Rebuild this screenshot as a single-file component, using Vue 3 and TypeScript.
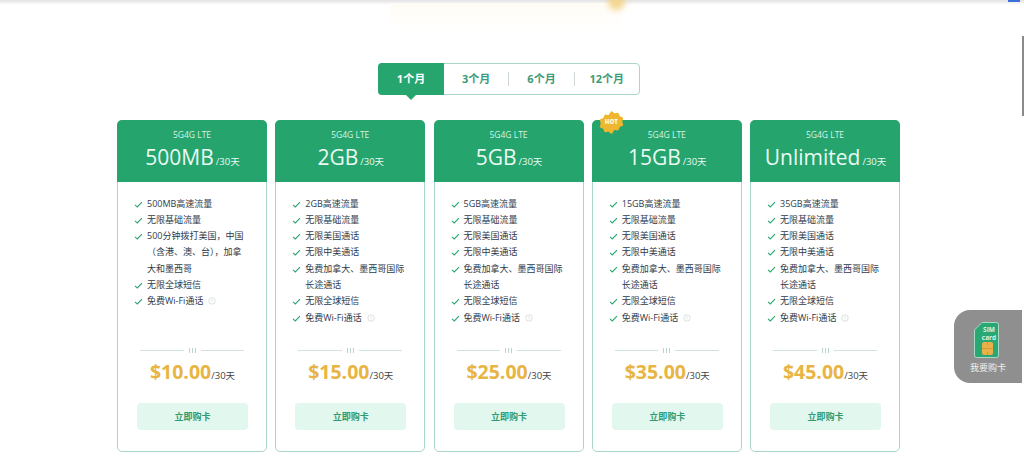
<script setup lang="ts">
interface Plan { size: string; price: string; hot?: boolean; features: { text: string; tip?: boolean }[] }
const common = (first: string): { text: string; tip?: boolean }[] => [
  { text: first },
  { text: '无限基础流量' },
  { text: '无限美国通话' },
  { text: '无限中美通话' },
  { text: '免费加拿大、墨西哥国际长途通话' },
  { text: '无限全球短信' },
  { text: '免费Wi-Fi通话', tip: true },
]
const plans: Plan[] = [
  { size: '500MB', price: '$10.00', features: [
    { text: '500MB高速流量' },
    { text: '无限基础流量' },
    { text: '500分钟拨打美国，中国（含港、澳、台），加拿大和墨西哥' },
    { text: '无限全球短信' },
    { text: '免费Wi-Fi通话', tip: true },
  ] },
  { size: '2GB', price: '$15.00', features: common('2GB高速流量') },
  { size: '5GB', price: '$25.00', features: common('5GB高速流量') },
  { size: '15GB', price: '$35.00', hot: true, features: common('15GB高速流量') },
  { size: 'Unlimited', price: '$45.00', features: common('35GB高速流量') },
]
const tabs = ['1个月', '3个月', '6个月', '12个月']
</script>

<template>
  <div class="page">
    <div class="topband"></div>
    <div class="glow"></div>
    <div class="blob"></div>
    <div class="bluetab"></div>
    <div class="scrollthumb"></div>

    <div class="tabs">
      <div v-for="(t, i) in tabs" :key="t" class="tab" :class="{ active: i === 0, sep: i > 1 }">{{ t }}</div>
    </div>

    <div class="cards">
      <section v-for="p in plans" :key="p.size" class="card">
        <svg v-if="p.hot" class="hot" viewBox="0 0 26 26" aria-hidden="true">
          <path d="M13 2l2.900 2.300 3.600-.8 1.500 3.400 3.300 1.500-.8 3.600.8 3.600-3.300 1.500-1.500 3.400-3.600-.8L13 24l-2.900-2.300-3.600.8-1.500-3.400-3.300-1.500.8-3.600-.8-3.600 3.300-1.500 1.500-3.400 3.600.8z" fill="#efb62f" stroke="#efb62f" stroke-width="1.500" stroke-linejoin="round" />
        </svg>
        <span v-if="p.hot" class="hot-text">HOT</span>
        <header class="head">
          <div class="net">5G4G LTE</div>
          <div class="size">{{ p.size }}<small>/30天</small></div>
        </header>
        <ul class="features">
          <li v-for="f in p.features" :key="f.text">
            <svg class="check" viewBox="0 0 10 8" aria-hidden="true"><path d="M1 4.500l2.600 2.300L9 1.200" /></svg>
            <span>{{ f.text }}<svg v-if="f.tip" class="tip" viewBox="0 0 10 10" aria-hidden="true"><circle cx="5" cy="5" r="4" /><path d="M5 3v2.500M5 7v.5" /></svg></span>
          </li>
        </ul>
        <div class="divider"><i></i><b></b><b></b><b></b><i></i></div>
        <div class="price"><strong>{{ p.price }}</strong><span>/30天</span></div>
        <button class="buy" type="button">立即购卡</button>
      </section>
    </div>

    <aside class="float">
      <svg class="sim" viewBox="0 0 25 36" aria-hidden="true">
        <path d="M8 .5h14.500a2 2 0 0 1 2 2v31a2 2 0 0 1-2 2h-20a2 2 0 0 1-2-2V8z" fill="#2aa873" stroke="#bfe8d4" stroke-width=".8" />
        <rect x="8" y="20" width="11" height="13" rx="2" fill="#eab04a" />
        <path d="M8 26.500h11M13.500 20v3M13.500 30v3" stroke="#c98f2e" stroke-width=".7" />
      </svg>
      <span class="sim-text">SIM<br />card</span>
      <div class="float-label">我要购卡</div>
    </aside>
  </div>
</template>

<style>
html, body { margin: 0; background: #fff; }
</style>

<style scoped>
.page {
  position: relative;
  height: 456px;
  overflow: hidden;
  background: #fff;
  padding-top: 63px;
  box-sizing: border-box;
  font-family: "Open Sans", "Noto Sans CJK SC", sans-serif;
  color: #2f3b4a;
}
.topband {
  position: absolute; left: 0; right: 0; top: 0; height: 5px;
  background: linear-gradient(#e2e2e2, #fff);
}
.glow {
  position: absolute; left: 390px; top: 3px; width: 230px; height: 28px;
  background: linear-gradient(#fffcf5, #fff);
}
.blob {
  position: absolute; left: 608px; top: -7px; width: 17px; height: 17px;
  border-radius: 50%; background: #f3d58e; filter: blur(3px);
}
.bluetab {
  position: absolute; left: 1008px; top: 0; width: 12px; height: 2px; background: #3f6fd8;
}
.scrollthumb {
  position: absolute; left: 1022px; top: 36px; width: 2px; height: 80px; background: #8a8a8a;
}
.tabs {
  width: 262px; height: 32px; box-sizing: border-box; margin-left: 378px;
  display: flex; align-items: center;
  border: 1px solid #a9d6c8; border-radius: 4px;
  font-size: 11px; font-weight: 700; color: #3d9a78;
}
.tab {
  flex: 1; height: 14px; line-height: 14px; text-align: center; position: relative;
}
.tab.sep { border-left: 1px solid #cfd8d5; }
.tab.active {
  height: 32px; line-height: 32px; margin: -1px 0 -1px -1px; flex: 0 0 66px;
  background: #27a56e; color: #fff; border-radius: 4px 0 0 4px;
}
.tab.active::after {
  content: ""; position: absolute; left: 50%; bottom: -5px; margin-left: -5px;
  border: 5px solid transparent; border-bottom: 0; border-top-color: #27a56e;
}
.cards {
  margin: 25px 0 0 117px; width: 783px;
  display: flex; justify-content: space-between;
}
.card {
  position: relative; width: 150px; height: 332px; box-sizing: border-box;
  border: 1px solid #a9d6c8; border-radius: 5px;
  display: flex; flex-direction: column; background: #fff;
}
.head {
  height: 62px; margin: -1px -1px 0; background: #25a56d; color: #fff;
  border-radius: 5px 5px 0 0; text-align: center; padding-top: 9px; box-sizing: border-box;
}
.net { font-size: 8.500px; line-height: 11px; color: #d9f3e7; }
.size { font-size: 21px; line-height: 30px; margin-top: 2px; color: #eafaf3; padding-left: 1px; }
.size small { font-size: 9.500px; margin-left: 2px; }
.hot { position: absolute; left: 6px; top: -11px; width: 25px; height: 25px; z-index: 2; }
.hot-text {
  position: absolute; left: 6px; top: -5px; width: 25px; text-align: center; z-index: 3;
  font-size: 6px; line-height: 12px; font-weight: 800; color: #fff8e0;
}
.features {
  list-style: none; margin: 13.500px 0 0; padding: 0 0 0 16px;
  height: 151.500px; font-size: 9px; line-height: 16.3px;
}
.features li { display: flex; width: 116px; }
.features li span { flex: 1; min-width: 0; }
.check {
  flex: none; width: 9px; height: 7px; margin: 5px 4px 0 0;
  fill: none; stroke: #27a56e; stroke-width: 1.200;
}
.tip {
  width: 8px; height: 8px; margin-left: 5px; vertical-align: -1px;
  fill: none; stroke: #c4d2cc; stroke-width: .8;
}
.divider {
  display: flex; align-items: center; gap: 2px; margin: 0 22px; height: 6px;
}
.divider i { flex: 1; height: 1px; background: #cfe5dc; }
.divider i:first-child { margin-right: 3px; }
.divider i:last-child { margin-left: 3px; }
.divider b { width: 1px; height: 5px; background: #b6d8ca; }
.price {
  text-align: center; margin-top: 4px; height: 29px; line-height: 29px; color: #444;
  font-size: 9.500px; padding-left: 1px;
}
.price strong { font-size: 19.500px; font-weight: 700; color: #e8b544; }
.buy {
  display: block; width: 111px; height: 27px; margin: 17px 0 0 19px; padding: 0;
  border: 0; border-radius: 4px; background: #e2f7ee; color: #2f9b72;
  font: 600 9px "Open Sans", "Noto Sans CJK SC", sans-serif;
}
.float {
  position: absolute; left: 954px; top: 310px; width: 68px; height: 73px;
  background: #8f8f8f; border-radius: 16px 0 0 16px;
  display: flex; flex-direction: column; align-items: center;
}
.sim { width: 25px; height: 36px; margin-top: 12px; margin-left: -3px; }
.sim-text {
  position: absolute; left: 25px; top: 16px; width: 20px; text-align: center;
  font-size: 6.500px; line-height: 7.500px; font-weight: 700; color: #d8f2e6;
}
.float-label { font-size: 9px; line-height: 14px; margin-top: 3px; color: #f0f0f0; }
</style>
